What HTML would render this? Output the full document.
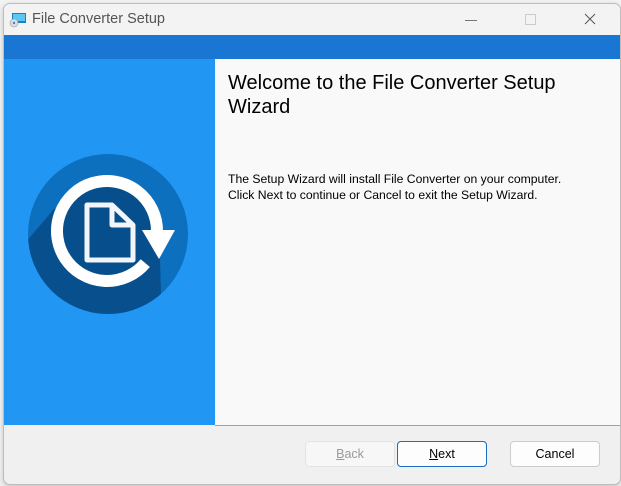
<!DOCTYPE html>
<html><head><meta charset="utf-8"><style>
body{margin:0;width:621px;height:486px;background:#f3f3f3;position:relative;overflow:hidden;font-family:"Liberation Sans",sans-serif}
.win{position:absolute;left:3px;top:3px;width:616px;height:480px;background:#f0f0f0;border:1px solid #bdbdbd;border-radius:7px;overflow:hidden;box-shadow:0 2px 6px rgba(0,0,0,.2)}
.title{position:absolute;left:0;top:0;width:616px;height:31px;background:#f3f3f3}
.title span{position:absolute;left:28px;top:7px;font-size:14.5px;color:#555}
.band{position:absolute;left:0;top:31px;width:616px;height:24px;background:#1976d2}
.left{position:absolute;left:0;top:55px;width:211px;height:366px;background:#2196f3}
.right{position:absolute;left:211px;top:55px;width:405px;height:366px;background:#f9f9f9;border-bottom:1px solid #a0a0a0}
h1{position:absolute;left:13px;top:12px;margin:0;font-weight:normal;font-size:20px;line-height:24px;color:#000}
p{position:absolute;left:13px;top:112px;margin:0;font-size:12.2px;line-height:16px;color:#000}
.btn{position:absolute;top:437px;width:88px;height:24px;border:1px solid #ccc;border-radius:4px;background:#fdfdfd;font-size:12.5px;text-align:center;line-height:24px;color:#000}
</style></head><body>
<div class="win">
<div class="title">
<svg style="position:absolute;left:5px;top:8px" width="18" height="16"><rect x="3" y="1" width="14" height="10" fill="#1a7fc8"/><rect x="4" y="2" width="12" height="7" fill="#5ec6f0"/><circle cx="5" cy="11" r="4" fill="#ddd" stroke="#999" stroke-width=".6"/><circle cx="5" cy="11" r="1.2" fill="#3a8ad0"/></svg>
<span>File Converter Setup</span>
<div style="position:absolute;left:461px;top:16px;width:12px;height:1px;background:#777"></div>
<div style="position:absolute;left:521px;top:10px;width:9px;height:9px;border:1px solid #ccc"></div>
<svg style="position:absolute;left:580px;top:9px" width="12" height="12"><path d="M1 1L11 11M11 1L1 11" stroke="#555" stroke-width="1"/></svg>
</div>
<div class="band"></div>
<div class="left">
<svg width="211" height="366">
<defs><clipPath id="c"><circle cx="104" cy="175" r="80"/></clipPath></defs>
<circle cx="104" cy="175" r="80" fill="#0d70be"/>
<g clip-path="url(#c)">
<path d="M50 150 L150 150 L156 200 L158 270 L60 290 L20 215 L20 185Z" fill="#084f8e"/>
</g>
<circle cx="103" cy="172" r="48" fill="#074f8c"/>
<path d="M141.3 204.1 A50 50 0 1 1 153 172" fill="none" stroke="#fff" stroke-width="12"/>
<path d="M138 171 L171 171 L155 200Z" fill="#fff"/>
<path d="M83 146 L108 146 L129 166 L129 201 L83 201Z" fill="#074f8c" stroke="#f2f5fa" stroke-width="5" stroke-linejoin="round"/>
<path d="M108 146 L108 166 L129 166" fill="none" stroke="#f2f5fa" stroke-width="5" stroke-linejoin="round"/>
</svg>
</div>
<div class="right">
<h1>Welcome to the File Converter Setup<br>Wizard</h1>
<p>The Setup Wizard will install File Converter on your computer.<br>Click Next to continue or Cancel to exit the Setup Wizard.</p>
</div>
<div class="btn" style="left:301px;color:#999;background:#f7f7f7;border-color:#e3e3e3"><u>B</u>ack</div>
<div class="btn" style="left:393px;border-color:#1b6bbf"><u>N</u>ext</div>
<div class="btn" style="left:506px">Cancel</div>
</div>
</body></html>
